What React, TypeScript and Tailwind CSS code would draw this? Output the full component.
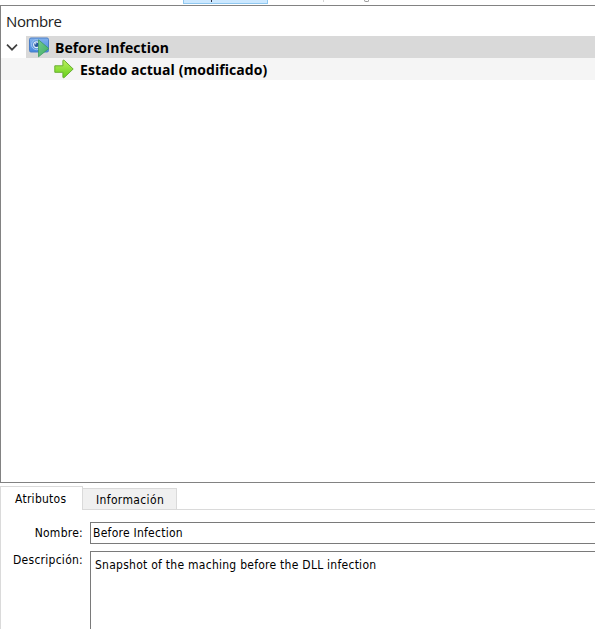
function SnapshotIcon() {
  return (
    <svg width="21" height="21" viewBox="0 0 21 21" className="block shrink-0">
      <defs>
        <linearGradient id="screen" x1="0" y1="0" x2="0" y2="1">
          <stop offset="0" stopColor="#83b2ed" />
          <stop offset="1" stopColor="#4386dc" />
        </linearGradient>
        <linearGradient id="play" x1="0" y1="0" x2="1" y2="1">
          <stop offset="0" stopColor="#72c98e" />
          <stop offset="1" stopColor="#3fae62" />
        </linearGradient>
      </defs>
      <rect x="0.5" y="1" width="19" height="14" rx="1.5" fill="url(#screen)" stroke="#4a7fc8" />
      <circle cx="7.5" cy="7.7" r="5" fill="#5f96dd" stroke="#a3c7f1" strokeWidth="0.9" />
      <circle cx="7.5" cy="7.7" r="2.9" fill="#28569d" stroke="#e3effb" strokeWidth="1.2" />
      <circle cx="6.6" cy="6.7" r="0.8" fill="#b9d5f5" />
      <path d="M9.5 2.8 19.8 11.5 9.5 19.8Z" fill="url(#play)" stroke="#3c9a60" strokeWidth="0.8" strokeLinejoin="round" />
    </svg>
  );
}

function ArrowIcon() {
  return (
    <svg width="20" height="20" viewBox="0 0 20 20" className="block shrink-0">
      <defs>
        <linearGradient id="arrow" x1="0" y1="0" x2="0" y2="1">
          <stop offset="0" stopColor="#bdf05c" />
          <stop offset="1" stopColor="#63d01a" />
        </linearGradient>
      </defs>
      <path d="M0.8 6.8H8.9V1.8Q9 0.6 10.2 1.3L19.2 10 10.2 18.6Q9 19.3 8.9 18.1V13.3H0.8Z" fill="url(#arrow)" stroke="#68ae32" strokeLinejoin="round" />
    </svg>
  );
}

function Toolbar() {
  return (
    <div className="flex h-[5px] overflow-hidden bg-white pl-[183px]">
      <div className="relative h-1 w-[85px] border-x border-b border-[#90c8f0] bg-[#cce8ff]">
        <span className="absolute left-[27px] top-0 h-[2px] w-px bg-[#334]" />
      </div>
      <span className="ml-[55px] h-[2px] w-px bg-[#d4d4d4]" />
      <span className="ml-[40px] h-[2px] w-[5px] rounded-b border-x border-b border-[#999]" />
    </div>
  );
}

function SnapshotTree() {
  return (
    <div className="h-[478px] border-y border-l border-[#828282] bg-white font-['Open_Sans','Noto_Sans',sans-serif] text-[15px] text-black">
      <div className="flex h-[30px] items-center pl-[5px] text-[#222]">
        <span className="tracking-[-0.4px]">Nombre</span>
      </div>
      <div className="flex h-[22px]">
        <div className="flex w-[25px] items-center pl-[5px]">
          <svg width="12" height="12" viewBox="0 0 12 12" fill="none" stroke="#404040" strokeWidth="1.7">
            <path d="m1 3.7 5 5 5-5" />
          </svg>
        </div>
        <div className="flex flex-1 items-center bg-[#d9d9d9] pl-[3px]">
          <SnapshotIcon />
          <span className="ml-[5px] whitespace-nowrap text-[14px] font-bold tracking-[0.07px]">Before Infection</span>
        </div>
      </div>
      <div className="flex h-[22px] items-center bg-[#f5f5f5] pl-[53px]">
        <ArrowIcon />
        <span className="ml-[6px] whitespace-nowrap text-[14px] font-bold tracking-[0.06px]">Estado actual (modificado)</span>
      </div>
    </div>
  );
}

function Details() {
  return (
    <div className="flex h-[146px] flex-col pt-[3px] font-['DejaVu_Sans_Condensed','DejaVu_Sans',sans-serif] text-[12px] tracking-[0.26px] text-black">
      <div className="flex h-6 shrink-0">
        <div className="flex w-[83px] border-x border-t border-[#dadada] bg-white pl-[14px] pt-[3px] leading-[18px]">
          <span>Atributos</span>
        </div>
        <div className="flex flex-1 items-end border-b border-[#dadada]">
          <div className="flex h-[21px] w-[94px] border-r border-t border-[#dadada] bg-[#f0f0f0] pl-[13px] pt-[2px] leading-[18px]">
            <span className="tracking-[0.36px]">Información</span>
          </div>
        </div>
      </div>
      <div className="flex-1 border-l border-[#dadada] pt-[12px]">
        <div className="flex h-[22px]">
          <div className="w-[89px] pr-[7px] text-right leading-[23px]">Nombre:</div>
          <div className="flex-1 whitespace-nowrap border-y border-l border-[#7a7a7a] pl-[2px] leading-[21px]">
            <span>Before Infection</span>
          </div>
        </div>
        <div className="mt-[7px] flex h-[78px]">
          <div className="w-[89px] pr-[7px] text-right leading-[18px]">Descripción:</div>
          <div className="flex-1 whitespace-nowrap border-l border-t border-[#7a7a7a] pl-[4px] pt-[3px] leading-[20px]">
            <span>Snapshot of the maching before the DLL infection</span>
          </div>
        </div>
      </div>
    </div>
  );
}

export default function App() {
  return (
    <div className="h-[629px] w-full overflow-hidden bg-white">
      <Toolbar />
      <SnapshotTree />
      <Details />
    </div>
  );
}
